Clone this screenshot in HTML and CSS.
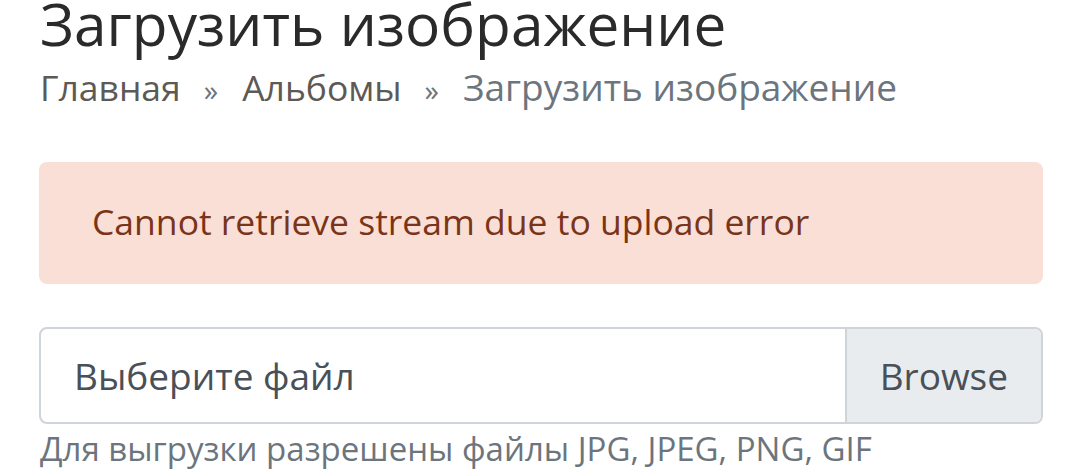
FILE: index.html
```html
<!DOCTYPE html>
<html lang="ru">
<head>
  <meta charset="UTF-8">
  <meta name="viewport" content="width=device-width, initial-scale=1.0">
  <title>Загрузить изображение</title>
  <link rel="stylesheet" href="styles.css">
</head>
<body>

<div class="container">
  <h3 class="page-title">Загрузить изображение</h3>
  <nav class="breadcrumb">
    <a href="#">Главная</a>
    <span class="sep">»</span>
    <a href="#">Альбомы</a>
    <span class="sep">»</span>
    <span class="active">Загрузить изображение</span>
  </nav>

  <div class="alert">Cannot retrieve stream due to upload error</div>

  <form class="upload">
    <label class="file-input">
      <span class="file-label">Выберите файл</span>
      <span class="file-button">Browse</span>
    </label>
    <small class="help">Для выгрузки разрешены файлы JPG, JPEG, PNG, GIF</small>
  </form>
</div>

</body>
</html>
```

FILE: styles.css
```css
/* Страница загрузки изображения */
body {
  margin: 0;
  font-family: "Open Sans", sans-serif;
  color: #212529;
  background: #fff;
}
.container {
  padding: 0 37px 0 39px;
}
.page-title {
  margin: -12px 0 0 1px;
  font-size: 58.5px;
  font-weight: 400;
  line-height: 1.2;
  color: #2a2a2a;
}
.breadcrumb {
  display: flex;
  align-items: baseline;
  margin: 1px 0 0 1px;
  font-size: 35.5px;
  line-height: 1.5;
}
.breadcrumb a {
  color: #5d5954;
  text-decoration: none;
}
.breadcrumb .sep {
  padding: 0 24px 0 23px;
  color: #6c757d;
  font-size: 29px;
}
.breadcrumb .active {
  color: #6c757d;
  font-size: 37px;
}
.alert {
  margin-top: 47px;
  padding: 33px 53px 36px;
  background: #fadfd6;
  border-radius: 8px;
  color: #7a3419;
  font-size: 35.5px;
  line-height: 1.5;
}
.upload {
  margin-top: 43px;
}
.file-input {
  display: flex;
  height: 97px;
  box-sizing: border-box;
  border: 2px solid #ced4da;
  border-radius: 8px;
  overflow: hidden;
  font-size: 37px;
  color: #495057;
}
.file-label {
  flex: 1;
  display: flex;
  align-items: center;
  padding-left: 33px;
}
.file-button {
  display: flex;
  align-items: center;
  padding: 0 33px;
  background: #e9ecef;
  border-left: 2px solid #ced4da;
}
.help {
  display: block;
  margin-top: 2px;
  margin-left: 1px;
  font-size: 33px;
  color: #6c757d;
}
```
